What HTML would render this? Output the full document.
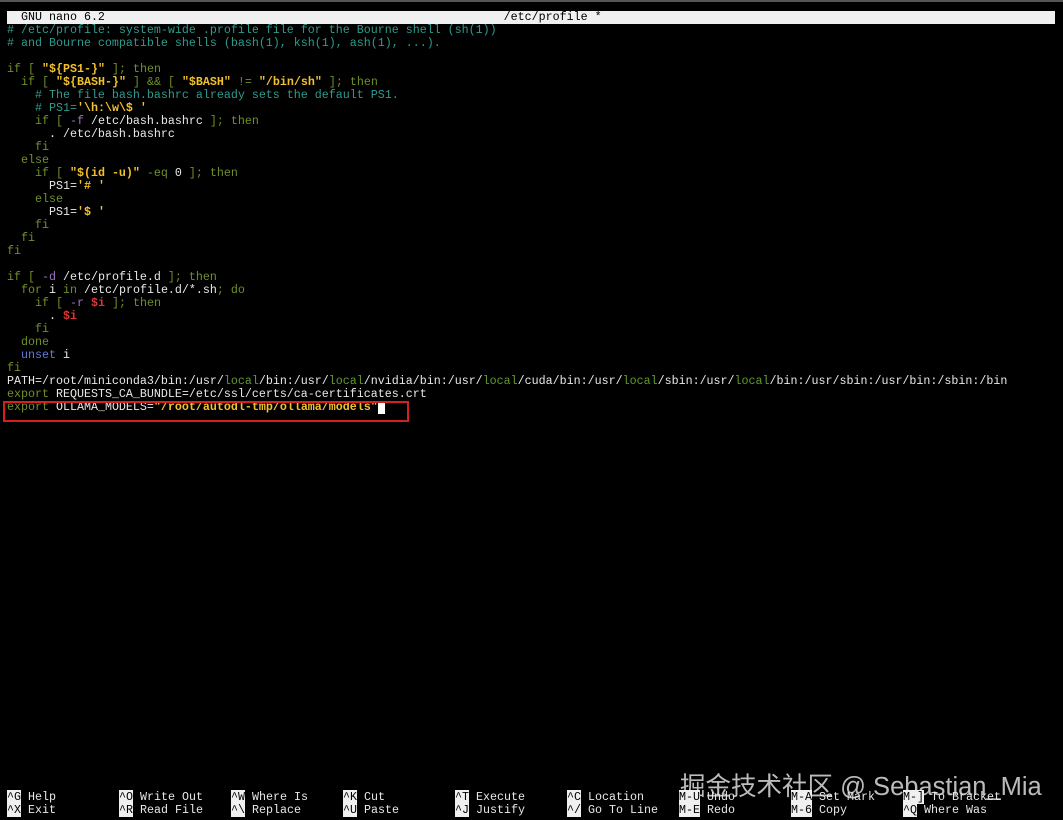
<!DOCTYPE html>
<html><head><meta charset="utf-8"><style>
html,body{margin:0;padding:0;background:#000;width:1063px;height:820px;overflow:hidden;position:relative}
.t{position:absolute;left:7px;white-space:pre;font-family:"Liberation Mono",monospace;font-size:11.67px;line-height:13px;height:13px;color:#e8e8e8}
.c{color:#2f9a8c}.k{color:#6f8f2a}.s{color:#f2c12e;font-weight:bold}.p{color:#a070c0}.r{color:#e03434;font-weight:bold}.b{color:#6478d8}.g{color:#5f9a30}
.inv{background:#f0f0f0;color:#000}
#bar{position:absolute;left:7px;top:11px;width:1048px;height:13px;background:#f0f0f0}
#top{position:absolute;left:0;top:0;width:1063px;height:2px;background:#555}
#box{position:absolute;left:3px;top:401px;width:406px;height:21px;border:2px solid #d42020;box-sizing:border-box}
#cur{display:inline-block;width:7px;height:13px;background:#fff;vertical-align:top}
#wm{position:absolute;left:680px;top:766px;font-family:"Liberation Sans","Noto Sans CJK SC",sans-serif;font-size:25.5px;color:rgba(220,220,220,0.85);white-space:nowrap}
.m{margin-top:3px}
</style></head><body>
<div id="top"></div>
<div id="bar"></div>
<div style="position:absolute;left:0;top:2px;width:1063px;height:818px">
<div class="t" style="top:9px;color:#000">  GNU nano 6.2                                                         /etc/profile *</div>
<div class="t c" style="top:22px"># /etc/profile: system-wide .profile file for the Bourne shell (sh(1))</div>
<div class="t c" style="top:35px"># and Bourne compatible shells (bash(1), ksh(1), ash(1), ...).</div>
<div class="t" style="top:61px"><span class="k">if</span> <span class="k">[</span> <span class="s">"${PS1-}"</span> <span class="k">]; then</span></div>
<div class="t" style="top:74px">  <span class="k">if</span> <span class="k">[</span> <span class="s">"${BASH-}"</span> <span class="k">] &amp;&amp; [</span> <span class="s">"$BASH"</span> <span class="k">!=</span> <span class="s">"/bin/sh"</span> <span class="k">]; then</span></div>
<div class="t c" style="top:87px">    # The file bash.bashrc already sets the default PS1.</div>
<div class="t" style="top:100px">    <span class="c"># PS1=</span><span class="s">'\h:\w\$ '</span></div>
<div class="t" style="top:113px">    <span class="k">if [</span> <span class="p">-f</span> /etc/bash.bashrc <span class="k">]; then</span></div>
<div class="t" style="top:126px">      . /etc/bash.bashrc</div>
<div class="t k" style="top:139px">    fi</div>
<div class="t k" style="top:152px">  else</div>
<div class="t" style="top:165px">    <span class="k">if [</span> <span class="s">"$(id -u)"</span> <span class="k">-eq</span> 0 <span class="k">]; then</span></div>
<div class="t" style="top:178px">      PS1=<span class="s">'# '</span></div>
<div class="t k" style="top:191px">    else</div>
<div class="t" style="top:204px">      PS1=<span class="s">'$ '</span></div>
<div class="t k" style="top:217px">    fi</div>
<div class="t k" style="top:230px">  fi</div>
<div class="t k" style="top:243px">fi</div>
<div class="t" style="top:269px"><span class="k">if [</span> <span class="p">-d</span> /etc/profile.d <span class="k">]; then</span></div>
<div class="t" style="top:282px">  <span class="k">for</span> i <span class="k">in</span> /etc/profile.d/*.sh<span class="k">; do</span></div>
<div class="t" style="top:295px">    <span class="k">if [</span> <span class="p">-r</span> <span class="r">$i</span> <span class="k">]; then</span></div>
<div class="t" style="top:308px">      . <span class="r">$i</span></div>
<div class="t k" style="top:321px">    fi</div>
<div class="t k" style="top:334px">  done</div>
<div class="t" style="top:347px">  <span class="b">unset</span> i</div>
<div class="t k" style="top:360px">fi</div>
<div class="t" style="top:373px">PATH=/root/miniconda3/bin:/usr/<span class="g">local</span>/bin:/usr/<span class="g">local</span>/nvidia/bin:/usr/<span class="g">local</span>/cuda/bin:/usr/<span class="g">local</span>/sbin:/usr/<span class="g">local</span>/bin:/usr/sbin:/usr/bin:/sbin:/bin</div>
<div class="t" style="top:386px"><span class="k">export</span> REQUESTS_CA_BUNDLE=/etc/ssl/certs/ca-certificates.crt</div>
<div class="t" style="top:399px"><span class="k">export</span> OLLAMA_MODELS=<span class="s">"/root/autodl-tmp/ollama/models"</span><span id="cur"></span></div>
</div>
<div id="box"></div>
<div id="wm">掘金技术社区 @ Sebastian_Mia</div>
<div class="t" style="top:791px;left:7px"><span class="inv">^G</span> Help</div>
<div class="t" style="top:804px;left:7px"><span class="inv">^X</span> Exit</div>
<div class="t" style="top:791px;left:119px"><span class="inv">^O</span> Write Out</div>
<div class="t" style="top:804px;left:119px"><span class="inv">^R</span> Read File</div>
<div class="t" style="top:791px;left:231px"><span class="inv">^W</span> Where Is</div>
<div class="t" style="top:804px;left:231px"><span class="inv">^\</span> Replace</div>
<div class="t" style="top:791px;left:343px"><span class="inv">^K</span> Cut</div>
<div class="t" style="top:804px;left:343px"><span class="inv">^U</span> Paste</div>
<div class="t" style="top:791px;left:455px"><span class="inv">^T</span> Execute</div>
<div class="t" style="top:804px;left:455px"><span class="inv">^J</span> Justify</div>
<div class="t" style="top:791px;left:567px"><span class="inv">^C</span> Location</div>
<div class="t" style="top:804px;left:567px"><span class="inv">^/</span> Go To Line</div>
<div class="t" style="top:791px;left:679px"><span class="inv">M-U</span> Undo</div>
<div class="t" style="top:804px;left:679px"><span class="inv">M-E</span> Redo</div>
<div class="t" style="top:791px;left:791px"><span class="inv">M-A</span> Set Mark</div>
<div class="t" style="top:804px;left:791px"><span class="inv">M-6</span> Copy</div>
<div class="t" style="top:791px;left:903px"><span class="inv">M-]</span> To Bracket</div>
<div class="t" style="top:804px;left:903px"><span class="inv">^Q</span> Where Was</div>
</body></html>
